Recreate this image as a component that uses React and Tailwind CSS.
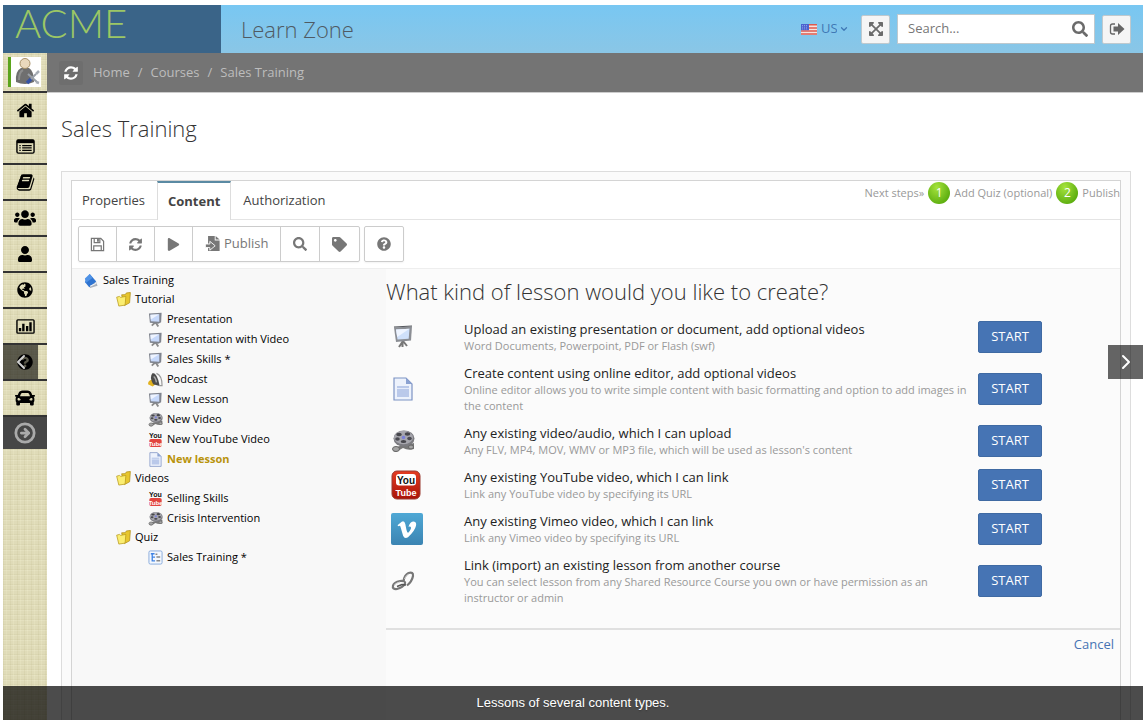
import React, { useState } from 'react';
import {
  FaUsers, FaUser, FaGlobeAmericas, FaQuestionCircle, FaCar, FaPlay, FaSearch, FaTag, FaExpandArrowsAlt,
} from 'react-icons/fa';
import { ChevronDown, ChevronLeft, ChevronRight, CircleArrowRight } from 'lucide-react';

const RefreshIcon = ({ className }) => (
  <svg viewBox="0 0 1792 1792" fill="currentColor" className={className}>
    <path d="M1639 1056q0 5-1 7-64 268-268 434.500t-478 166.500q-146 0-282.500-55t-243.500-157l-129 129q-19 19-45 19t-45-19-19-45v-448q0-26 19-45t45-19h448q26 0 45 19t19 45-19 45l-137 137q71 66 161 102t187 36q134 0 250-65t186-179q11-17 53-117 8-23 30-23h192q13 0 22.500 9.500t9.500 22.500zm25-800v448q0 26-19 45t-45 19h-448q-26 0-45-19t-19-45 19-45l138-138q-148-137-349-137-134 0-250 65t-186 179q-11 17-53 117-8 23-30 23h-199q-13 0-22.500-9.500t-9.500-22.500v-7q65-268 270-434.500t480-166.500q146 0 284 55.500t245 156.500l130-129q19-19 45-19t45 19 19 45z" />
  </svg>
);

const HomeIcon = ({ className }) => (
  <svg viewBox="0 0 1792 1792" fill="currentColor" className={className}>
    <path d="M1472 992v480q0 26-19 45t-45 19h-384v-384h-256v384h-384q-26 0-45-19t-19-45v-480q0-1 .5-3t.5-3l575-474 575 474q1 2 1 6zm223-69l-62 74q-8 9-21 11h-3q-13 0-21-7l-692-577-692 577q-12 8-24 7-13-2-21-11l-62-74q-8-10-7-23.500t11-21.500l719-599q32-26 76-26t76 26l244 204v-195q0-14 9-23t23-9h192q14 0 23 9t9 23v408l219 182q10 8 11 21.500t-7 23.500z" />
  </svg>
);

const BookIcon = ({ className }) => (
  <svg viewBox="0 0 1792 1792" fill="currentColor" className={className}>
    <path d="M1703 478q40 57 18 129l-275 906q-19 64-76.500 107.500t-122.500 43.500h-923q-77 0-148.500-53.500t-99.500-131.500q-24-67-2-127 0-4 3-27t4-37q1-8-3-21.500t-3-19.500q2-11 8-21t16.500-23.500 16.500-23.500q23-38 45-91.500t30-91.500q3-10 .5-30t-.5-28q3-11 17-28t17-23q21-36 42-92t25-90q1-9-2.500-32t.5-28q4-13 22-30.500t22-22.500q19-26 42.500-84.500t27.500-96.500q1-8-3-25.500t-2-26.500q2-8 9-18t18-23 17-21q8-12 16.500-30.500t15-35 16-36 19.500-32 26.500-23.500 36-11.500 47.500 5.500l-1 3q38-9 51-9h761q74 0 114 56t18 130l-274 906q-36 119-71.500 153.500t-128.500 34.500h-869q-27 0-38 15-11 16-1 43 24 70 144 70h923q29 0 56-15.500t35-41.500l300-987q7-22 5-57 38 15 59 43zm-1064 2q-4 13 2 22.500t20 9.500h608q13 0 25.500-9.500t16.500-22.500l21-64q4-13-2-22.500t-20-9.500h-608q-13 0-25.500 9.500t-16.500 22.500zm-83 256q-4 13 2 22.500t20 9.500h608q13 0 25.500-9.500t16.500-22.500l21-64q4-13-2-22.500t-20-9.500h-608q-13 0-25.500 9.500t-16.500 22.500z" />
  </svg>
);

const ListIcon = ({ className }) => (
  <svg viewBox="0 0 20 16" className={className}>
    <rect x="1" y="1" width="18" height="14" rx="1.500" fill="none" stroke="currentColor" strokeWidth="1.500" />
    <path d="M1 1h18v3.500H1z" fill="currentColor" />
    <path d="M3.500 7h1.500M3.500 9.500h1.500M3.500 12h1.500M6.500 7h10M6.500 9.500h10M6.500 12h10" stroke="currentColor" strokeWidth="1.300" />
  </svg>
);

const ChartIcon = ({ className }) => (
  <svg viewBox="0 0 20 16" className={className}>
    <rect x="1" y="1" width="18" height="14" rx="1" fill="none" stroke="currentColor" strokeWidth="1.500" />
    <path d="M3 9.500h2.500V13H3zM6.500 5H9v8H6.500zM10.500 7.500H13V13h-2.500zM14 3.500h2.500V13H14z" fill="currentColor" />
  </svg>
);

const SaveIcon = ({ className }) => (
  <svg viewBox="0 0 16 16" fill="none" stroke="currentColor" strokeWidth="1.300" className={className}>
    <path d="M1.500 1.500h10l3 3v10h-13z" />
    <path d="M4.500 1.500v4.500h6v-4.500M4 14.500v-5h8v5" />
    <path d="M7.500 2h2v3h-2z" fill="currentColor" stroke="none" />
  </svg>
);

const ImportIcon = ({ className }) => (
  <svg viewBox="0 0 16 18" className={className}>
    <path d="M3 0h7.500v5H16v12H3z" fill="currentColor" />
    <path d="M11.500 0v4H16z" fill="currentColor" />
    <path d="M0 9h5V6l6 5-6 5v-3H0z" fill="currentColor" stroke="#fff" strokeWidth="1" />
  </svg>
);

const ExitIcon = ({ className }) => (
  <svg viewBox="0 0 16 14" className={className}>
    <path d="M6 2H3.500Q1.500 2 1.500 4v6q0 2 2 2H6" fill="none" stroke="currentColor" strokeWidth="1.300" />
    <path d="M4.500 4.500H9V1L15.500 7 9 13v-3.500H4.500z" fill="currentColor" />
  </svg>
);

const FlagIcon = ({ className }) => (
  <svg viewBox="0 0 16 11" className={className}>
    <path d="M0 0h16v11H0z" fill="#f6e4e0" />
    <path d="M0 .8h16M0 3.900h16M0 7h16M0 10.100h16" stroke="#dd5a4e" strokeWidth="1.500" />
    <path d="M0 0h8v6.200H0z" fill="#4a62cf" />
    <path d="M1 1.500h6M1 3.200h6M1 4.900h6" stroke="#a9b6f0" strokeWidth=".7" strokeDasharray="1 1" />
  </svg>
);

const AvatarIcon = ({ className }) => (
  <svg viewBox="0 0 30 30" className={className}>
    <path d="M5 25q-1-11 5-14h8q5 3 5 14-9 4-18 0z" fill="#6f6f6f" />
    <path d="M8 23q0-8 4-10" fill="none" stroke="#8d8d8d" strokeWidth="2" />
    <circle cx="14" cy="6.500" r="5" fill="#ead9bd" stroke="#a89167" />
    <path d="M17 25l8-8M17 17l9 8" stroke="#9aa0a8" strokeWidth="2" />
    <path d="M16 26l4-4" stroke="#3653a4" strokeWidth="3.500" />
    <path d="M25 17l3-3M25 25l3 1" stroke="#a7adb5" strokeWidth="2.500" />
  </svg>
);

// Tree and lesson type icons
const CourseIcon = ({ className }) => (
  <svg viewBox="0 0 16 16" className={className}>
    <path d="M5 12l9-2.500 1.500 4L7 16z" fill="#aab1bb" />
    <path d="M6.500 0L14 8.500 6 15 1 9z" fill="#2f74d0" />
    <path d="M6.500 0L10 4.200 2 10.200 1 5z" fill="#4f92e6" />
    <path d="M7 14l7-3.500" stroke="#eef2f8" strokeWidth="1.200" />
  </svg>
);

const FolderIcon = ({ className }) => (
  <svg viewBox="0 0 16 16" className={className}>
    <path d="M6 3l4-.2 1-1.800 4.300-.5-.8 11L9 14.500z" fill="#e7c62e" stroke="#b08d14" strokeWidth=".8" />
    <path d="M.7 5.500l3-.8 1.300 1 5.500-1-.8 9.300L3 15z" fill="#fbee72" stroke="#b89a1c" strokeWidth=".8" />
  </svg>
);

const ScreenIcon = ({ className }) => (
  <svg viewBox="0 0 20 24" className={className}>
    <path d="M10 16l-4 6M10 16l4 5M9.500 16v6" stroke="#777" strokeWidth="2" />
    <path d="M1 2.500l18-1-1 14L3 17z" fill="#8b8e94" />
    <path d="M3 4.500l13.500-.8-.8 10L4.500 14.500z" fill="#cfe0fa" />
    <path d="M3 4.500l13.500-.8L4.200 12z" fill="#eef4ff" />
    <path d="M1 2l18-1" stroke="#55585e" strokeWidth="1.200" />
  </svg>
);

const ScreenSmallIcon = ({ className }) => (
  <svg viewBox="0 0 16 16" className={className}>
    <path d="M8 11l-4 3.500M8 11l3 4.500" stroke="#8a8a8a" strokeWidth="2" />
    <path d="M1 1.500L14.500.7 14 11l-3 1.500-9-1z" fill="#80848e" />
    <path d="M2.500 2.800l9.500-.5v8l-9-.5z" fill="#c6d8fa" />
    <path d="M2.500 2.800l9.500-.5L3 8z" fill="#edf3ff" />
  </svg>
);

const PodcastIcon = ({ className }) => (
  <svg viewBox="0 0 16 16" className={className}>
    <path d="M0 13q0-4 4-5l4 5-3 2.500z" fill="#e2b21f" />
    <path d="M5 1q5 0 7.500 14l-7-2Q1 5 5 1z" fill="#4c4c4c" />
    <path d="M6 5q2 1 3 6" fill="none" stroke="#aaa" strokeWidth="1.500" />
    <path d="M9 1.500q6 2 6 13h-3" fill="none" stroke="#999" strokeWidth="1.200" />
  </svg>
);

const ReelIcon = ({ className }) => (
  <svg viewBox="0 0 24 24" className={className}>
    <path d="M3 19q8-3 10-3t10-2v6q-6 2-11-1l-7 4q-5-1-2-4z" fill="#777" />
    <ellipse cx="13" cy="9.500" rx="10.500" ry="8" fill="#7b7b80" />
    <ellipse cx="12.500" cy="8.500" rx="9.500" ry="6.800" fill="#a6a6ad" />
    <ellipse cx="8" cy="5.500" rx="2.800" ry="1.700" fill="#46464c" />
    <ellipse cx="16.500" cy="5" rx="2.800" ry="1.700" fill="#46464c" />
    <ellipse cx="6.500" cy="10" rx="2.300" ry="1.700" fill="#4b4b52" />
    <ellipse cx="18.500" cy="9.500" rx="2.300" ry="1.700" fill="#4b4b52" />
    <ellipse cx="12.500" cy="12.500" rx="2.800" ry="1.500" fill="#46464c" />
    <circle cx="12.500" cy="8.500" r="1.800" fill="#7a80d8" />
    <ellipse cx="5" cy="20" rx="3.500" ry="2.500" fill="#a5a5a5" stroke="#666" />
    <ellipse cx="20" cy="18" rx="2.500" ry="2" fill="#a5a5a5" stroke="#666" />
  </svg>
);

const PageIcon = ({ className }) => (
  <svg viewBox="0 0 20 24" className={className}>
    <path d="M1 1h12l6 6v16H1z" fill="#edf2fc" stroke="#7d93c4" strokeWidth="1.200" />
    <path d="M13 1v6h6z" fill="#8ba2d2" />
    <path d="M4 9h12v11H4z" fill="#bac9ea" />
    <path d="M4 11.500h12" stroke="#e4ebfa" />
  </svg>
);

const YouTubeSmallIcon = ({ className }) => (
  <svg viewBox="0 0 16 17" className={className} fontFamily="'Liberation Sans Narrow', 'Liberation Sans', sans-serif" fontWeight="bold" textAnchor="middle">
    <text x="8" y="7" fontSize="8" fill="#111">You</text>
    <rect x="1" y="8" width="14" height="9" rx="2" fill="#e2453f" />
    <text x="8" y="15.500" fontSize="7" fill="#fff">Tube</text>
  </svg>
);

const YouTubeIcon = ({ className }) => (
  <svg viewBox="0 0 30 30" className={className} fontFamily="'Liberation Sans Narrow', 'Liberation Sans', sans-serif" fontWeight="bold" textAnchor="middle">
    <defs>
      <linearGradient id="yt" x1="0" y1="0" x2="0" y2="1">
        <stop offset="0" stopColor="#e43c22" />
        <stop offset="1" stopColor="#a91408" />
      </linearGradient>
    </defs>
    <rect x="1" y="1" width="28" height="28" rx="5" fill="url(#yt)" stroke="#9a3a30" />
    <rect x="5" y="4" width="20" height="11.500" rx="3" fill="#fff" />
    <text x="15" y="13.500" fontSize="10" fill="#111">You</text>
    <text x="15" y="25.500" fontSize="9" fill="#fff">Tube</text>
  </svg>
);

const VimeoIcon = ({ className }) => (
  <svg viewBox="0 0 32 32" className={className}>
    <defs>
      <linearGradient id="vimeo" x1="0" y1="0" x2="0" y2="1">
        <stop offset="0" stopColor="#4fa8d5" />
        <stop offset="1" stopColor="#3b84b2" />
      </linearGradient>
    </defs>
    <rect width="32" height="32" rx="2" fill="url(#vimeo)" />
    <path d="M6.500 12.200l4.200-3.500q2.800-1.300 3.600 2.200l1.200 6q.8 3.300 1.700 2.800 1.500-1.200 2.700-4 .8-2.700-2.400-1.900 1.600-5.400 5.300-5.300 3 .3 2.200 4.300-1.200 5.300-8 11.500-3.400 2.200-4.900-1.600l-2.700-9.200q-.6-1.300-2-.2z" fill="#fff" />
  </svg>
);

const ChainIcon = ({ className }) => (
  <svg viewBox="0 0 24 20" className={className} fill="none">
    <path d="M12.500 10q1-6 5-8 5-1.500 4.500 3-1 5.500-6 9.500" stroke="#777" strokeWidth="2.200" />
    <path d="M2 14.500q1-3.500 7-4.500 6-.5 5 2.500-2 4-8 5.500-5 .5-4-3.500z" stroke="#777" strokeWidth="2.200" />
    <path d="M3 14.500q2-2.500 6-3.500M13.500 8q1.500-4 4.500-5" stroke="#d0d0d0" strokeWidth="1" />
    <path d="M6 15.500l5-2 4 .5" stroke="#555" strokeWidth="1.500" />
  </svg>
);

const QuizIcon = ({ className }) => (
  <svg viewBox="0 0 16 16" className={className}>
    <rect x="1" y="1" width="14" height="14" rx="1.500" fill="#f4f8fe" stroke="#85a9dc" />
    <path d="M3 4h4M4.500 4v7.500h3M4.500 7.500h3" fill="none" stroke="#3f83e4" strokeWidth="1.400" />
    <path d="M9 7.500h4M9 11.500h4M8 4.500h2" stroke="#888" strokeWidth="1.500" />
  </svg>
);

const menu = [
  { label: 'Home', icon: HomeIcon },
  { label: 'Courses', icon: ListIcon },
  { label: 'Library', icon: BookIcon },
  { label: 'Groups', icon: FaUsers, size: 'size-[22px]' },
  { label: 'Users', icon: FaUser, size: 'size-4' },
  { label: 'Website', icon: FaGlobeAmericas, size: 'size-4' },
  { label: 'Reports', icon: ChartIcon },
  { label: 'Help', icon: FaQuestionCircle, size: 'size-4' },
  { label: 'Tours', icon: FaCar, size: 'size-5' },
];

const tree = [
  {
    title: 'Tutorial',
    items: [
      { title: 'Presentation', icon: ScreenSmallIcon },
      { title: 'Presentation with Video', icon: ScreenSmallIcon },
      { title: 'Sales Skills *', icon: ScreenSmallIcon },
      { title: 'Podcast', icon: PodcastIcon },
      { title: 'New Lesson', icon: ScreenSmallIcon },
      { title: 'New Video', icon: ReelIcon },
      { title: 'New YouTube Video', icon: YouTubeSmallIcon },
      { title: 'New lesson', icon: PageIcon, active: true },
    ],
  },
  {
    title: 'Videos',
    items: [
      { title: 'Selling Skills', icon: YouTubeSmallIcon },
      { title: 'Crisis Intervention', icon: ReelIcon },
    ],
  },
  { title: 'Quiz', items: [{ title: 'Sales Training *', icon: QuizIcon }] },
];

const lessonTypes = [
  {
    title: 'Upload an existing presentation or document, add optional videos',
    text: 'Word Documents, Powerpoint, PDF or Flash (swf)',
    icon: ScreenIcon,
    size: 'size-6',
  },
  {
    title: 'Create content using online editor, add optional videos',
    text: 'Online editor allows you to write simple content with basic formatting and option to add images in the content',
    icon: PageIcon,
    size: 'size-6',
  },
  {
    title: 'Any existing video/audio, which I can upload',
    text: "Any FLV, MP4, MOV, WMV or MP3 file, which will be used as lesson's content",
    icon: ReelIcon,
    size: 'size-6',
  },
  {
    title: 'Any existing YouTube video, which I can link',
    text: 'Link any YouTube video by specifying its URL',
    icon: YouTubeIcon,
    size: 'size-[30px]',
  },
  {
    title: 'Any existing Vimeo video, which I can link',
    text: 'Link any Vimeo video by specifying its URL',
    icon: VimeoIcon,
    size: 'size-8',
  },
  {
    title: 'Link (import) an existing lesson from another course',
    text: 'You can select lesson from any Shared Resource Course you own or have permission as an instructor or admin',
    icon: ChainIcon,
    size: 'size-6',
  },
];

const Header = () => (
  <header className="flex h-12 shrink-0 bg-linear-to-b from-[#78c7f2] to-[#8ac6e6]">
    <a href="#home" className="w-[218px] shrink-0 bg-[#3a6488] pl-3 font-['Lato'] text-[40px] leading-9 font-light text-[#9cc765]">
      ACME
    </a>
    <div className="flex flex-1 items-center pr-3 pl-5">
      <span className="flex-1 text-[22px] font-light text-[#4f5a63]">Learn Zone</span>
      <label className="relative mr-3 flex items-center text-[#3f78b5]">
        <FlagIcon className="mr-1 h-[11px] w-4" />
        <select aria-label="Language" className="w-7 appearance-none bg-transparent pr-3 text-[13px] outline-none" defaultValue="US">
          <option>US</option>
        </select>
        <ChevronDown className="pointer-events-none absolute right-0 size-2.5" strokeWidth={3} />
      </label>
      <button type="button" aria-label="Full screen" className="flex h-[29px] w-[29px] items-center justify-center rounded-xs border border-[#bfc9ce] bg-[#f5f5f5] text-[#6b6b6b]">
        <FaExpandArrowsAlt className="size-4" />
      </button>
      <div className="mx-[7px] flex h-[30px] w-[198px] items-center border border-[#bfc9ce] bg-white pr-1.5 pl-2.5">
        <input type="search" aria-label="Search" placeholder="Search..." className="min-w-0 flex-1 text-[13px] outline-none placeholder:text-[#777]" />
        <button type="button" aria-label="Submit search">
          <FaSearch className="size-4 text-[#6b6b6b]" />
        </button>
      </div>
      <button type="button" aria-label="Sign out" className="flex h-[29px] w-[29px] items-center justify-center rounded-xs border border-[#bfc9ce] bg-[#f5f5f5] text-[#666]">
        <ExitIcon className="h-3.5 w-4" />
      </button>
    </div>
  </header>
);

const Sidebar = () => (
  <nav className="w-11 shrink-0 bg-[#dfdbb8] bg-[repeating-linear-gradient(90deg,rgba(150,140,80,0.08)_0_1px,transparent_1px_3px,rgba(255,255,220,0.15)_3px_4px,transparent_4px_7px),repeating-linear-gradient(0deg,rgba(150,140,80,0.07)_0_1px,transparent_1px_4px,rgba(255,255,230,0.15)_4px_5px)] text-black">
    <a href="#profile" aria-label="Profile" className="flex h-10 items-center border-b-2 border-[#333] pl-[5px]">
      <span className="flex border-l-[3px] border-[#5ba51c] bg-white">
        <AvatarIcon className="size-[30px]" />
      </span>
    </a>
    {menu.map(({ label, icon: Icon, size }) => (
      <a key={label} href={`#${label.toLowerCase()}`} aria-label={label} className="flex h-9 items-center justify-center border-b-2 border-[#333]">
        <Icon className={size || 'size-[19px]'} />
      </a>
    ))}
    <button type="button" aria-label="Expand menu" className="flex h-8 w-full items-center justify-center bg-[#464646] text-[#aaa]">
      <CircleArrowRight className="size-[22px]" strokeWidth={3} />
    </button>
  </nav>
);

const Breadcrumb = () => (
  <div className="flex h-10 items-center border-b border-[#ccc] bg-[#747474] px-3 text-[13px] text-[#bdbdbd]">
    <button type="button" aria-label="Reload" className="mr-2.5 flex size-6 items-center justify-center rounded-xs bg-[#6e6e6e] text-white">
      <RefreshIcon className="size-4" />
    </button>
    <a href="#home">Home</a>
    <span className="mx-2">/</span>
    <a href="#courses">Courses</a>
    <span className="mx-2">/</span>
    <a href="#sales-training">Sales Training</a>
  </div>
);

const StepBadge = ({ children }) => (
  <span className="mx-1 flex size-[22px] items-center justify-center rounded-full bg-radial-[at_40%_25%] from-[#a6e33c] to-[#449c00] text-xs text-white">
    {children}
  </span>
);

const Tabs = ({ tab, setTab }) => (
  <div className="flex h-[39px] border-b border-[#e4e4e4]">
    {['Properties', 'Content', 'Authorization'].map((name) => (
      <button
        key={name}
        type="button"
        onClick={() => setTab(name)}
        className={
          tab === name
            ? '-mb-px border-x border-t-2 border-x-[#ddd] border-t-[#5a8aa3] bg-white px-2.5 text-[13px] font-bold text-[#444]'
            : 'border-t-2 border-transparent px-3 text-[13px] text-[#444] first:pl-2.5'
        }
      >
        {name}
      </button>
    ))}
    <div className="ml-auto flex h-6 items-center text-[11px] text-[#999]">
      Next steps»
      <StepBadge>1</StepBadge>
      Add Quiz (optional)
      <StepBadge>2</StepBadge>
      Publish
    </div>
  </div>
);

const Toolbar = () => (
  <div className="flex gap-1 border-b border-[#eee] px-1.5 py-1.5 text-[#777]">
    <div className="flex h-9 divide-x divide-[#ccc] rounded-xs border border-[#ccc] shadow-xs">
      <button type="button" aria-label="Save" className="px-[11px]"><SaveIcon className="size-[15px]" /></button>
      <button type="button" aria-label="Refresh" className="px-[11px]"><RefreshIcon className="size-[15px]" /></button>
      <button type="button" aria-label="Preview" className="px-3"><FaPlay className="size-[13px]" /></button>
      <button type="button" className="flex items-center gap-1 px-3 text-[13px]">
        <ImportIcon className="h-4 w-[15px]" />
        Publish
      </button>
      <button type="button" aria-label="Find" className="px-3"><FaSearch className="size-3.5" /></button>
      <button type="button" aria-label="Tags" className="px-3"><FaTag className="size-[15px]" /></button>
    </div>
    <button type="button" aria-label="Help" className="h-9 rounded-xs border border-[#ccc] px-3 shadow-xs">
      <FaQuestionCircle className="size-3.5" />
    </button>
  </div>
);

const CourseTree = () => (
  <div className="w-[314px] shrink-0 bg-[#f8f8f8] pt-0.5 pl-3 text-[11px] text-black">
    <a href="#course" className="flex h-[19px] items-center gap-[5px]">
      <CourseIcon className="size-3.5" />
      Sales Training
    </a>
    <ul className="pl-8">
      {tree.map((folder) => (
        <li key={folder.title}>
          <a href={`#${folder.title.toLowerCase()}`} className="flex h-[19px] items-center gap-1">
            <FolderIcon className="size-[15px]" />
            {folder.title}
          </a>
          <ul className="pl-8">
            {folder.items.map(({ title, icon: Icon, active }) => (
              <li key={title}>
                <a href="#lesson" className={active ? 'flex h-5 items-center gap-1 font-bold text-[#b8930c]' : 'flex h-5 items-center gap-1'}>
                  <Icon className="size-[15px]" />
                  {title}
                </a>
              </li>
            ))}
          </ul>
        </li>
      ))}
    </ul>
  </div>
);

const LessonChooser = () => (
  <div className="min-w-0 flex-1 bg-[#fbfbfb]">
    <h2 className="pt-1 pb-1.5 text-[22px] leading-9 font-light text-[#333]">What kind of lesson would you like to create?</h2>
    <ul className="border-b-2 border-[#e0e0e0] pr-[78px] pb-[17px]">
      {lessonTypes.map(({ title, text, icon: Icon, size }) => (
        <li key={title} className="flex items-center py-[5px]">
          <div className="-my-1 w-[78px] shrink-0 pl-[5px]">
            <Icon className={size} />
          </div>
          <div className="flex-1 pr-2">
            <h3 className="text-[13px] leading-[18px] text-[#222]">{title}</h3>
            <p className="text-[11px] leading-4 text-[#999]">{text}</p>
          </div>
          <button type="button" className="-my-2 h-8 w-16 rounded-xs border border-[#3f6aa3] bg-[#4674b4] text-[13px] text-white">
            START
          </button>
        </li>
      ))}
    </ul>
    <div className="pt-1 pr-1.5 text-right text-[13px] leading-5">
      <a href="#cancel" className="text-[#4674b4]">Cancel</a>
    </div>
  </div>
);

const App = () => {
  const [tab, setTab] = useState('Content');

  return (
    <div className="relative flex min-h-screen flex-col bg-white pt-[5px] pb-[3px] pl-[3px] font-['Open_Sans',sans-serif]">
      <Header />
      <div className="flex flex-1">
        <Sidebar />
        <main className="flex min-w-0 flex-1 flex-col">
          <Breadcrumb />
          <h1 className="px-3.5 pt-4 pb-6 text-[22px] leading-[38px] font-light text-[#333]">Sales Training</h1>
          <div className="mr-3 ml-3.5 flex flex-1 flex-col border border-b-0 border-[#ddd] bg-[#fbfbfb] px-[9px] pt-2">
            <section className="flex flex-1 flex-col border border-b-0 border-[#d4d4d4] bg-white">
              <Tabs tab={tab} setTab={setTab} />
              <Toolbar />
              <div className="flex flex-1">
                <CourseTree />
                <LessonChooser />
              </div>
            </section>
          </div>
        </main>
      </div>

      <button type="button" aria-label="Previous slide" className="absolute top-[345px] left-[3px] flex h-[34px] w-[35px] items-center justify-center bg-black/60 text-white/80">
        <ChevronLeft className="size-6" />
      </button>
      <button type="button" aria-label="Next slide" className="absolute top-[345px] right-0 flex h-[34px] w-[35px] items-center justify-center bg-black/60 text-white">
        <ChevronRight className="size-6" />
      </button>
      <p className="absolute right-0 bottom-[3px] left-[3px] bg-black/70 text-center font-['Liberation_Sans',sans-serif] text-[13px] leading-[34px] text-white text-shadow-sm">
        Lessons of several content types.
      </p>
    </div>
  );
};

export default App;
